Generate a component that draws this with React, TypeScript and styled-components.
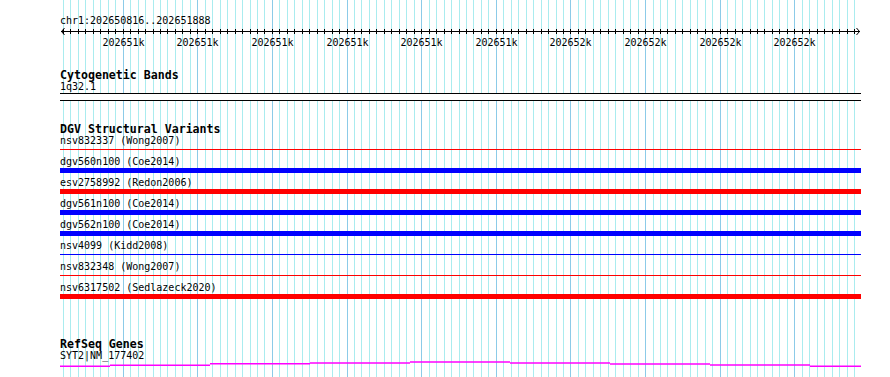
import React from 'react';
import styled, { createGlobalStyle } from 'styled-components';

const START = 202650816;
const END = 202651888;
const LEFT = 60;
const WIDTH = 800;

// screen x for a base position
const toX = (bp: number) => LEFT + ((bp - START) * WIDTH) / (END - START);

const ticks: number[] = [];
for (let bp = 202650820; bp <= 202651880; bp += 10) ticks.push(bp);

const variants = [
  { label: 'nsv832337 (Wong2007)', color: '#ff0000', thick: false },
  { label: 'dgv560n100 (Coe2014)', color: '#0000ff', thick: true },
  { label: 'esv2758992 (Redon2006)', color: '#ff0000', thick: true },
  { label: 'dgv561n100 (Coe2014)', color: '#0000ff', thick: true },
  { label: 'dgv562n100 (Coe2014)', color: '#0000ff', thick: true },
  { label: 'nsv4099 (Kidd2008)', color: '#0000ff', thick: false },
  { label: 'nsv832348 (Wong2007)', color: '#ff0000', thick: false },
  { label: 'nsv6317502 (Sedlazeck2020)', color: '#ff0000', thick: true },
];

// gene line steps: [fromX, toX, y] in local svg coords (svg top = 361)
const geneSteps = [
  [0, 50, 5.3],
  [50, 150, 4.3],
  [150, 250, 2.7],
  [250, 350, 2],
  [350, 450, 1],
  [450, 550, 2],
  [550, 650, 3],
  [650, 750, 4],
  [750, 801, 5.3],
];

const GlobalStyle = createGlobalStyle`
  html, body {
    margin: 0;
    padding: 0;
    background: #ffffff;
  }
  body {
    font-family: "DejaVu Sans Mono", "Liberation Mono", monospace;
    font-size: 10px;
    color: #000;
  }
`;

const View = styled.div`
  position: relative;
  width: 890px;
  height: 377px;
  overflow: hidden;
  background: #ffffff;
`;

const GridLayer = styled.svg`
  position: absolute;
  left: 0;
  top: 0;
`;

const Tracks = styled.div`
  position: relative;
  display: flex;
  flex-direction: column;
  padding-left: ${LEFT}px;
  width: 801px;
`;

const Locus = styled.div`
  margin-top: 14px;
  box-sizing: border-box;
  height: 12px;
  padding-top: 1px;
  line-height: 12px;
  font-size: 10px;
  white-space: nowrap;
`;

const Axis = styled.svg`
  display: block;
  overflow: visible;
`;

const TrackTitle = styled.div<{ $gap: number }>`
  margin-top: ${p => p.$gap}px;
  box-sizing: border-box;
  height: 12px;
  padding-top: 1px;
  line-height: 12px;
  font-size: 11.6px;
  font-weight: bold;
  white-space: nowrap;
`;

const FeatureLabel = styled.div`
  box-sizing: border-box;
  height: 12px;
  padding-top: 1px;
  line-height: 12px;
  font-size: 10px;
  white-space: nowrap;
`;

const Band = styled.div`
  margin-top: 1px;
  height: 6px;
  border-top: 1px solid #000;
  border-bottom: 1px solid #000;
  background: #ffffff;
`;

const Lane = styled.div`
  height: 9px;
`;

const Bar = styled.div<{ $color: string; $thick: boolean }>`
  margin-top: ${p => (p.$thick ? 1 : 3)}px;
  height: ${p => (p.$thick ? 5 : 1)}px;
  background: ${p => p.$color};
`;

const GeneLine = styled.svg`
  display: block;
`;

const Grid: React.FC = () => (
  <GridLayer width={890} height={377}>
    {ticks.map(bp => {
      const major = bp % 100 === 0;
      return (
        <rect
          key={bp}
          x={Math.round(toX(bp))}
          y={0}
          width={1}
          height={377}
          fill={major ? '#8ccbe8' : '#aaecef'}
        />
      );
    })}
  </GridLayer>
);

const Ruler: React.FC = () => (
  <Axis width={801} height={24}>
    <rect x={1} y={5} width={799} height={1} fill="#000" />
    <polyline points="4.5,2 1.5,5.5 4.5,9" fill="none" stroke="#000" strokeWidth={1} />
    <polyline points="796.5,2 799.5,5.5 796.5,9" fill="none" stroke="#000" strokeWidth={1} />
    {ticks.map(bp => (
      <rect key={bp} x={Math.round(toX(bp)) - LEFT} y={3} width={1} height={5} fill="#000" />
    ))}
    {ticks
      .filter(bp => bp % 100 === 0)
      .map(bp => (
        <text
          key={bp}
          x={Math.round(toX(bp)) - LEFT + 0.5}
          y={19.5}
          textAnchor="middle"
          fontFamily='"DejaVu Sans Mono", "Liberation Mono", monospace'
          fontSize={10}
          fill="#000"
        >
          {Math.round(bp / 1000)}k
        </text>
      ))}
  </Axis>
);

const App: React.FC = () => {
  return (
    <View>
      <GlobalStyle />
      <Grid />
      <Tracks>
        <Locus>chr1:202650816..202651888</Locus>
        <Ruler />

        <TrackTitle $gap={18}>Cytogenetic Bands</TrackTitle>
        <FeatureLabel>1q32.1</FeatureLabel>
        <Band />

        <TrackTitle $gap={21}>DGV Structural Variants</TrackTitle>
        {variants.map(v => (
          <React.Fragment key={v.label}>
            <FeatureLabel>{v.label}</FeatureLabel>
            <Lane>
              <Bar $color={v.color} $thick={v.thick} />
            </Lane>
          </React.Fragment>
        ))}

        <TrackTitle $gap={35}>RefSeq Genes</TrackTitle>
        <FeatureLabel>SYT2|NM_177402</FeatureLabel>
        <GeneLine width={801} height={8}>
          {geneSteps.map(([a, b, y]) => (
            <line key={a} x1={a} x2={b} y1={y} y2={y} stroke="#ff00ff" strokeWidth={1.5} />
          ))}
        </GeneLine>
      </Tracks>
    </View>
  );
};

export default App;
